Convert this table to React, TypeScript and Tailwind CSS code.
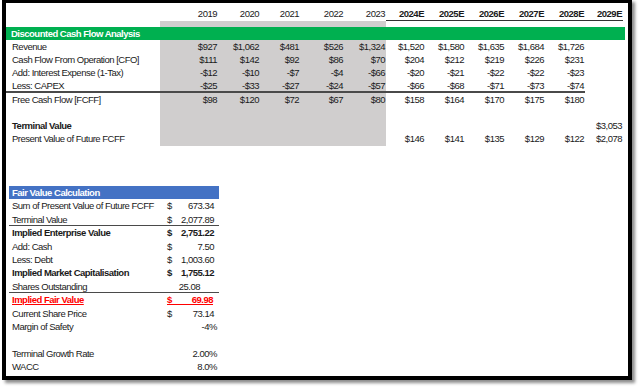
const W = [
  "w-[58px]",
  "w-[42px]",
  "w-[40px]",
  "w-[44px]",
  "w-[42px]",
  "w-[39px]",
  "w-[40px]",
  "w-[40px]",
  "w-[40px]",
  "w-[40px]",
  "w-[38px]",
];

const years = ["2019", "2020", "2021", "2022", "2023", "2024E", "2025E", "2026E", "2027E", "2028E", "2029E"];

type RowProps = {
  label?: string;
  values?: string[];
  bold?: boolean;
  h: string;
  line?: boolean;
};

function Row({ label = "", values = [], bold, h, line }: RowProps) {
  return (
    <div className={`flex ${h} leading-[13px]`}>
      <div className={`w-[154px] pl-[6px] whitespace-nowrap ${bold ? "font-bold" : ""} ${line ? "border-b-2 border-[#4a4a4a]" : ""}`}>
        {label}
      </div>
      {W.map((w, i) => (
        <div
          key={i}
          className={`${w} text-right pr-[1px] ${i < 5 ? "bg-[#d0cece]" : ""} ${line && i < 10 ? "border-b-2 border-[#4a4a4a]" : ""}`}
        >
          {values[i] ?? ""}
        </div>
      ))}
    </div>
  );
}

type FvProps = {
  label?: string;
  value?: string;
  dollar?: boolean;
  bold?: boolean;
  line?: boolean;
  pr?: string;
};

function FvRow({ label = "", value = "", dollar, bold, line, pr = "pr-[5px]" }: FvProps) {
  return (
    <div className={`flex h-[13.4px] leading-[13px] ${bold ? "font-bold" : ""} ${line ? "border-b-[1.5px] border-[#4a4a4a]" : ""}`}>
      <div className="w-[154px] pl-[3px] whitespace-nowrap">{label}</div>
      <div className="w-[12px] pl-[4px]">{dollar ? "$" : ""}</div>
      <div className={`flex-1 text-right ${pr}`}>{value}</div>
    </div>
  );
}

export default function App() {
  return (
    <div className="w-[640px] h-[387px] bg-white overflow-hidden font-['Liberation_Sans_Narrow','Arial_Narrow','Liberation_Sans',sans-serif] text-[9.5px] tracking-[-0.5px] text-[#1a1a1a]">
      <div className="ml-[2px] mt-[-1px] w-[630px] h-[381px] border-4 border-black bg-white shadow-[3px_3px_3px_rgba(0,0,0,0.45)]">
        {/* cash flow table */}
        <div className="flex pt-[4px] leading-[13px]">
          <div className="w-[154px]" />
          {W.map((w, i) => (
            <div
              key={i}
              className={`${w} text-right pr-[1px] ${i >= 5 ? "font-bold border-b border-[#333]" : ""}`}
            >
              {years[i]}
            </div>
          ))}
        </div>
        <Row h="h-[6px]" />
        <div className="w-[619px] h-[13px] bg-[#00b050] text-white font-bold pl-[5px] leading-[13px]">
          Discounted Cash Flow Analysis
        </div>
        <Row h="h-[13px]" label="Revenue" values={["$927", "$1,062", "$481", "$526", "$1,324", "$1,520", "$1,580", "$1,635", "$1,684", "$1,726"]} />
        <Row h="h-[13px]" label="Cash Flow From Operation [CFO]" values={["$111", "$142", "$92", "$86", "$70", "$204", "$212", "$219", "$226", "$231"]} />
        <Row h="h-[13px]" label="Add: Interest Expense (1-Tax)" values={["-$12", "-$10", "-$7", "-$4", "-$66", "-$20", "-$21", "-$22", "-$22", "-$23"]} />
        <Row h="h-[14px]" line label="Less: CAPEX" values={["-$25", "-$33", "-$27", "-$24", "-$57", "-$66", "-$68", "-$71", "-$73", "-$74"]} />
        <Row h="h-[13px]" label="Free Cash Flow [FCFF]" values={["$98", "$120", "$72", "$67", "$80", "$158", "$164", "$170", "$175", "$180"]} />
        <Row h="h-[13px]" />
        <Row h="h-[13px]" bold label="Terminal Value" values={["", "", "", "", "", "", "", "", "", "", "$3,053"]} />
        <Row h="h-[14px]" label="Present Value of Future FCFF" values={["", "", "", "", "", "$146", "$141", "$135", "$129", "$122", "$2,078"]} />

        <div className="h-[40px]" />

        {/* fair value */}
        <div className="ml-[3px] w-[210px]">
          <div className="h-[13.4px] bg-[#4472c4] text-white font-bold leading-[13.4px] pl-[3px]">
            Fair Value Calculation
          </div>
          <FvRow label="Sum of Present Value of Future FCFF" dollar value="673.34" />
          <FvRow label="Terminal Value" dollar value="2,077.89" line />
          <FvRow label="Implied Enterprise Value" dollar value="2,751.22" bold />
          <FvRow label="Add: Cash" dollar value="7.50" />
          <FvRow label="Less: Debt" dollar value="1,003.60" />
          <FvRow label="Implied Market Capitalisation" dollar value="1,755.12" bold />
          <FvRow label="Shares Outstanding" value="25.08" pr="pr-[19px]" line />
          <div className="flex h-[13.4px] leading-[13px] font-bold text-[#ff0000]">
            <div className="w-[154px] pl-[3px] underline">Implied Fair Value</div>
            <div className="flex-1 pt-[2px] pr-[6px] pl-[4px]">
              <div className="flex justify-between h-[10px] leading-[9px] border-b border-[#ff0000]">
                <span>$</span>
                <span>69.98</span>
              </div>
            </div>
          </div>
          <FvRow label="Current Share Price" dollar value="73.14" />
          <FvRow label="Margin of Safety" value="-4%" pr="pr-[2px]" />
          <FvRow />
          <FvRow label="Terminal Growth Rate" value="2.00%" pr="pr-[2px]" />
          <FvRow label="WACC" value="8.0%" pr="pr-[2px]" />
        </div>
      </div>
    </div>
  );
}
